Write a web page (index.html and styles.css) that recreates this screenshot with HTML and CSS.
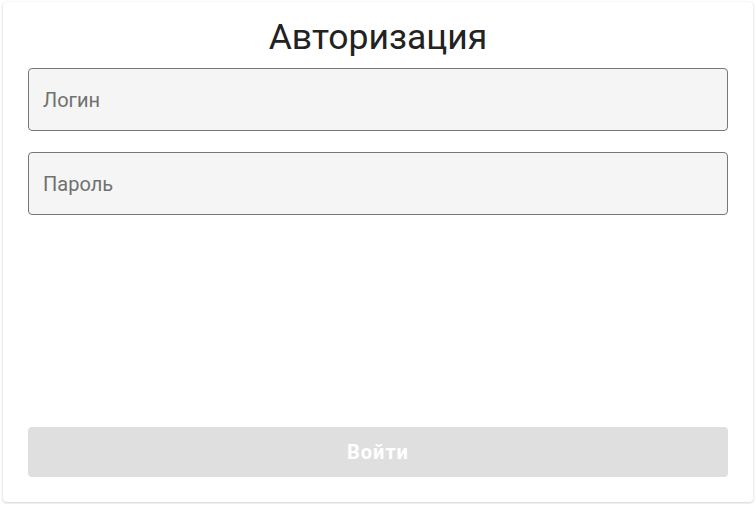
FILE: index.html
```html
<!DOCTYPE html>
<html lang="ru">
<head>
    <meta charset="UTF-8">
    <meta name="viewport" content="width=device-width, initial-scale=1.0">
    <title>Авторизация</title>
    <link rel="stylesheet" href="styles.css">
</head>
<body>
    <form class="card" onsubmit="return false">
        <h1 class="title">Авторизация</h1>
        <input class="field" type="text" placeholder="Логин">
        <input class="field" type="password" placeholder="Пароль">
        <div class="spacer"></div>
        <button class="submit" type="submit" disabled>Войти</button>
    </form>
</body>
</html>
```

FILE: styles.css
```css
body {
    margin: 0;
    background-color: #fff;
    font-family: Roboto, 'Liberation Sans', sans-serif;
}
.card {
    margin: 2px 3px;
    width: 750px;
    height: 500px;
    box-sizing: border-box;
    padding: 0 25px 25px;
    display: flex;
    flex-direction: column;
    background-color: #fff;
    border-radius: 4px;
    box-shadow: 0 1px 3px rgba(0, 0, 0, 0.18), 0 0 1px rgba(0, 0, 0, 0.08);
}
.title {
    margin: 0;
    height: 66px;
    line-height: 70px;
    font-size: 35.5px;
    font-weight: 400;
    color: #222;
    text-align: center;
}
.field {
    height: 63px;
    box-sizing: border-box;
    margin-bottom: 21px;
    padding: 0 14px;
    font-family: inherit;
    font-size: 20px;
    color: #222;
    background-color: #f5f5f5;
    border: 1px solid #777;
    border-radius: 4px;
    outline: none;
}
.field::placeholder {
    color: #707070;
}
.spacer {
    flex: 1;
}
.submit {
    height: 50px;
    font-family: inherit;
    font-size: 20px;
    font-weight: 700;
    letter-spacing: 1px;
    color: #fff;
    background-color: #dfdfdf;
    border: none;
    border-radius: 4px;
}
```
